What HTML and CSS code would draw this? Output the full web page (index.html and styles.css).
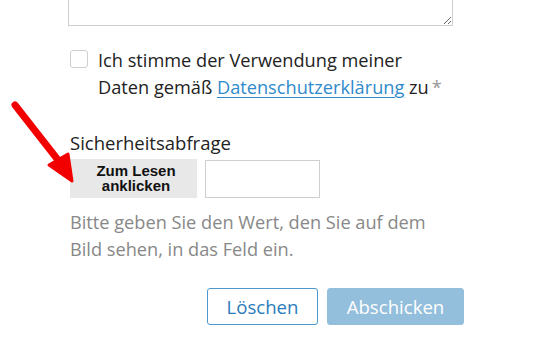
FILE: index.html
```html
<!DOCTYPE html>
<html lang="de">
<head>
<meta charset="utf-8">
<link rel="stylesheet" href="styles.css">
</head>
<body>
<div class="page">
  <form class="form">
    <textarea class="message"></textarea>
    <label class="consent">
      <span class="box"></span>
      <span class="consent-text">Ich stimme der Verwendung meiner<br>Daten gemäß <a href="#" class="link">Datenschutzerklärung</a> zu<span class="req">*</span></span>
    </label>
    <div class="captcha">
      <div class="captcha-label">Sicherheitsabfrage</div>
      <div class="captcha-row">
        <div class="captcha-img">Zum Lesen<br>anklicken</div>
        <input class="captcha-input" type="text">
      </div>
      <p class="hint">Bitte geben Sie den Wert, den Sie auf dem<br>Bild sehen, in das Feld ein.</p>
    </div>
    <div class="actions">
      <button type="button" class="btn btn-reset">Löschen</button>
      <button type="button" class="btn btn-submit">Abschicken</button>
    </div>
  </form>
  <svg class="arrow" width="80" height="90" viewBox="0 0 80 90">
    <line x1="15" y1="7" x2="58" y2="62" stroke="#f20000" stroke-width="7" stroke-linecap="round"/>
    <polygon points="49,67 68,56 72,83" fill="#f20000" stroke="#f20000" stroke-width="3" stroke-linejoin="round"/>
  </svg>
</div>
</body>
</html>
```

FILE: styles.css
```css
html, body {
  margin: 0;
  padding: 0;
  background: #fff;
}
body {
  font-family: "Open Sans", "Liberation Sans", sans-serif;
  color: #222;
  overflow: hidden;
}
.page {
  position: relative;
  width: 537px;
  height: 347px;
}
.form {
  padding-left: 68px;
  width: 396px;
  display: flex;
  flex-direction: column;
}
.message {
  display: block;
  box-sizing: border-box;
  width: 385px;
  height: 60px;
  margin: -34px 0 0 0;
  border: 1px solid #cfcfcf;
  border-radius: 0;
  resize: vertical;
}
.consent {
  display: flex;
  align-items: flex-start;
  margin-top: 21px;
  padding-left: 2px;
  font-size: 18.2px;
  line-height: 27px;
  width: 394px;
}
.box {
  flex: none;
  box-sizing: border-box;
  width: 18px;
  height: 18px;
  margin-top: 3px;
  margin-right: 10px;
  border: 1px solid #cfcfcf;
  border-radius: 3px;
  background: #fff;
}
.consent-text {
  width: 366px;
  white-space: nowrap;
}
.link {
  color: #2f8acb;
  text-decoration: underline;
  text-underline-offset: 3px;
  text-decoration-thickness: 1px;
}
.req {
  color: #999;
  margin-left: 3px;
}
.captcha {
  padding-left: 2px;
  margin-top: 29px;
}
.captcha-label {
  font-size: 18.5px;
  line-height: 26px;
}
.captcha-row {
  display: flex;
  align-items: flex-start;
  gap: 8px;
  margin-top: 3px;
}
.captcha-img {
  box-sizing: border-box;
  width: 127px;
  height: 39px;
  background: #e8e8e8;
  font-family: "Liberation Sans", Arial, sans-serif;
  font-weight: bold;
  font-size: 15px;
  line-height: 15px;
  color: #111;
  text-align: center;
  padding: 4px 0 0 5px;
}
.captcha-input {
  box-sizing: border-box;
  width: 115px;
  height: 38px;
  margin: 1px 0 0 0;
  border: 1px solid #cfcfcf;
  border-radius: 0;
  padding: 0 6px;
}
.hint {
  margin: 11px 0 0 0;
  font-size: 18.2px;
  line-height: 27px;
  color: #888;
  width: 394px;
  white-space: nowrap;
}
.actions {
  display: flex;
  justify-content: flex-end;
  gap: 9px;
  margin-top: 25px;
}
.btn {
  box-sizing: border-box;
  height: 37px;
  font-family: "Open Sans", "Liberation Sans", sans-serif;
  font-size: 18.6px;
  border-radius: 3px;
  padding: 0;
  cursor: pointer;
}
.btn-reset {
  width: 111px;
  background: #fff;
  border: 1px solid #4d98d0;
  color: #2b7cbc;
}
.btn-submit {
  width: 137px;
  background: #93bedc;
  border: 1px solid #93bedc;
  color: #fff;
}
.arrow {
  position: absolute;
  left: 0;
  top: 98px;
}
```
